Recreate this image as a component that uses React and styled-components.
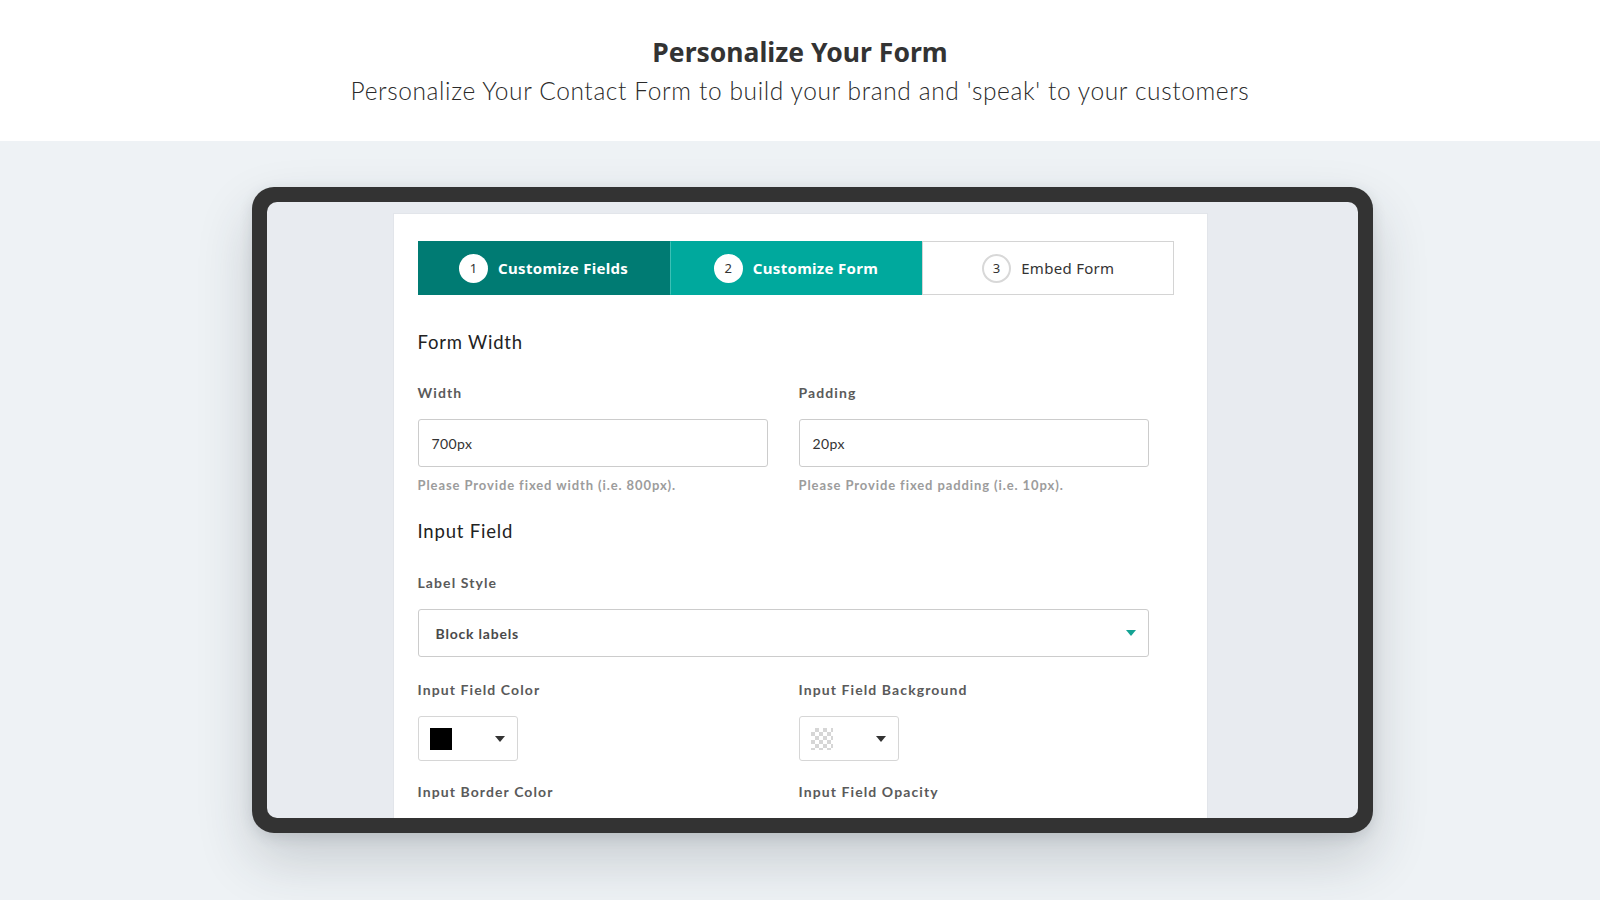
import styled, { createGlobalStyle } from "styled-components"

const GlobalStyle = createGlobalStyle`
  html, body {
    margin: 0;
    padding: 0;
    background: #eef2f5;
  }
  body {
    font-family: Lato, "Open Sans", sans-serif;
    color: #333;
  }
`

const Page = styled.div`
  width: 1600px;
  height: 900px;
  overflow: hidden;
  background: #eef2f5;
`

const Header = styled.header`
  background: #fff;
  height: 141px;
  padding-top: 36px;
  box-sizing: border-box;
  text-align: center;
`

const Title = styled.h1`
  margin: 0;
  font-family: "Noto Sans", Lato, sans-serif;
  font-size: 26.5px;
  font-weight: 700;
  color: #333;
  line-height: 32px;
`

const Subtitle = styled.p`
  margin: 8px 0 0;
  font-family: Lato, sans-serif;
  font-size: 24.5px;
  font-weight: 300;
  color: #2a2a2a;
  letter-spacing: 0.62px;
  line-height: 30px;
`

const Stage = styled.section`
  display: flex;
  justify-content: center;
  padding-top: 46px;
`

const Device = styled.div`
  width: 1121px;
  height: 646px;
  box-sizing: border-box;
  background: #333;
  border-radius: 22px;
  padding: 15px;
  margin-left: 25px;
  box-shadow: 0 26px 55px rgba(40, 50, 60, 0.2), 0 4px 14px rgba(40, 50, 60, 0.12);
`

const Screen = styled.div`
  height: 100%;
  background: #e8ebf0;
  border-radius: 10px;
  overflow: hidden;
  display: flex;
  justify-content: center;
  padding-top: 11px;
  box-sizing: border-box;
`

const Card = styled.div`
  width: 815px;
  margin-right: 25px;
  background: #fff;
  border: 1px solid #e2e5ea;
  border-bottom: none;
  padding: 27px 24px 0;
  box-sizing: border-box;
`

const Steps = styled.div`
  display: flex;
  width: 757px;
  height: 54px;
`

const Step = styled.div`
  flex: 1;
  display: flex;
  align-items: center;
  justify-content: center;
  gap: 10px;
  background: ${(p) => (p.$tone === "dark" ? "#007b73" : p.$tone === "mid" ? "#00a99d" : "#fff")};
  color: ${(p) => (p.$tone === "light" ? "#333" : "#fff")};
  border: 1px solid ${(p) => (p.$tone === "light" ? "#d4d4d4" : "transparent")};
  border-left: ${(p) => (p.$tone === "mid" ? "1px solid #3cc0b5" : undefined)};
  font-family: "Noto Sans", sans-serif;
  font-size: 15px;
  font-weight: ${(p) => (p.$tone === "light" ? 400 : 700)};
  letter-spacing: 0.3px;
`

const StepNum = styled.span`
  width: 29px;
  height: 29px;
  border-radius: 50%;
  box-sizing: border-box;
  background: #fff;
  border: ${(p) => (p.$outlined ? "2px solid #d8d8d8" : "none")};
  color: #333;
  display: flex;
  align-items: center;
  justify-content: center;
  font-family: "Noto Sans", sans-serif;
  font-size: 13px;
  font-weight: 400;
`

const SectionTitle = styled.h2`
  margin: ${(p) => p.$top || "36px"} 0 0;
  font-family: Lato, sans-serif;
  font-size: 18.5px;
  font-weight: 400;
  color: #222;
  letter-spacing: 0.8px;
  line-height: 22px;
`

const Row = styled.div`
  display: flex;
  gap: 31px;
`

const Field = styled.div`
  width: ${(p) => p.$w || "350px"};
`

const Label = styled.div`
  margin-top: ${(p) => p.$top || "31px"};
  font-family: Lato, sans-serif;
  font-size: 14px;
  font-weight: 700;
  color: #5a5a5a;
  letter-spacing: 1.1px;
  line-height: 18px;
`

const TextBox = styled.div`
  margin-top: 17px;
  height: 48px;
  box-sizing: border-box;
  border: 1px solid #ccc;
  border-radius: 3px;
  padding: 0 ${(p) => p.$pad || "13px"};
  display: flex;
  align-items: center;
  justify-content: space-between;
  font-family: Lato, sans-serif;
  font-size: 14px;
  font-weight: ${(p) => (p.$bold ? 700 : 400)};
  color: ${(p) => (p.$bold ? "#4a4a4a" : "#333")};
  letter-spacing: ${(p) => (p.$bold ? "0.8px" : "0.4px")};
`

const Help = styled.div`
  margin-top: 10px;
  font-family: Lato, sans-serif;
  font-size: 13px;
  font-weight: 700;
  color: #9c9c9c;
  letter-spacing: 0.9px;
  line-height: 17px;
`

const Caret = styled.span`
  width: 0;
  height: 0;
  margin-right: ${(p) => p.$nudge || 0}px;
  border-left: ${(p) => p.$size || 5}px solid transparent;
  border-right: ${(p) => p.$size || 5}px solid transparent;
  border-top: ${(p) => (p.$size || 5) + 1}px solid ${(p) => p.$color || "#333"};
`

const Picker = styled.div`
  margin-top: 17px;
  width: 100px;
  height: 45px;
  box-sizing: border-box;
  border: 1px solid #d6d6d6;
  border-radius: 3px;
  display: flex;
  align-items: center;
  justify-content: space-between;
  padding: 0 12px 0 11px;
`

const Swatch = styled.span`
  width: 22px;
  height: 22px;
  background: #000;
`

const Checker = styled.span`
  width: 22px;
  height: 22px;
  background-color: #fff;
  background-image:
    linear-gradient(45deg, #cfcfcf 25%, transparent 25%, transparent 75%, #cfcfcf 75%),
    linear-gradient(45deg, #cfcfcf 25%, transparent 25%, transparent 75%, #cfcfcf 75%);
  background-size: 8px 8px;
  background-position: 0 0, 4px 4px;
  opacity: 0.85;
`

const App = () => {
  return (
    <Page>
      <GlobalStyle />
      <Header>
        <Title>Personalize Your Form</Title>
        <Subtitle>Personalize Your Contact Form to build your brand and 'speak' to your customers</Subtitle>
      </Header>
      <Stage>
        <Device>
          <Screen>
            <Card>
              <Steps>
                <Step $tone="dark">
                  <StepNum>1</StepNum>
                  Customize Fields
                </Step>
                <Step $tone="mid">
                  <StepNum>2</StepNum>
                  Customize Form
                </Step>
                <Step $tone="light">
                  <StepNum $outlined>3</StepNum>
                  Embed Form
                </Step>
              </Steps>

              <SectionTitle>Form Width</SectionTitle>
              <Row>
                <Field>
                  <Label>Width</Label>
                  <TextBox>700px</TextBox>
                  <Help>Please Provide fixed width (i.e. 800px).</Help>
                </Field>
                <Field>
                  <Label>Padding</Label>
                  <TextBox>20px</TextBox>
                  <Help>Please Provide fixed padding (i.e. 10px).</Help>
                </Field>
              </Row>

              <SectionTitle $top="26px">Input Field</SectionTitle>
              <Field $w="731px">
                <Label $top="32px">Label Style</Label>
                <TextBox $pad="17px" $bold>
                  Block labels
                  <Caret $size={5} $color="#14a394" $nudge={-5} />
                </TextBox>
              </Field>

              <Row>
                <Field>
                  <Label $top="24px">Input Field Color</Label>
                  <Picker>
                    <Swatch />
                    <Caret $size={5} />
                  </Picker>
                </Field>
                <Field>
                  <Label $top="24px">Input Field Background</Label>
                  <Picker>
                    <Checker />
                    <Caret $size={5} />
                  </Picker>
                </Field>
              </Row>

              <Row>
                <Field>
                  <Label $top="22px">Input Border Color</Label>
                </Field>
                <Field>
                  <Label $top="22px">Input Field Opacity</Label>
                </Field>
              </Row>
            </Card>
          </Screen>
        </Device>
      </Stage>
    </Page>
  )
}

export default App
